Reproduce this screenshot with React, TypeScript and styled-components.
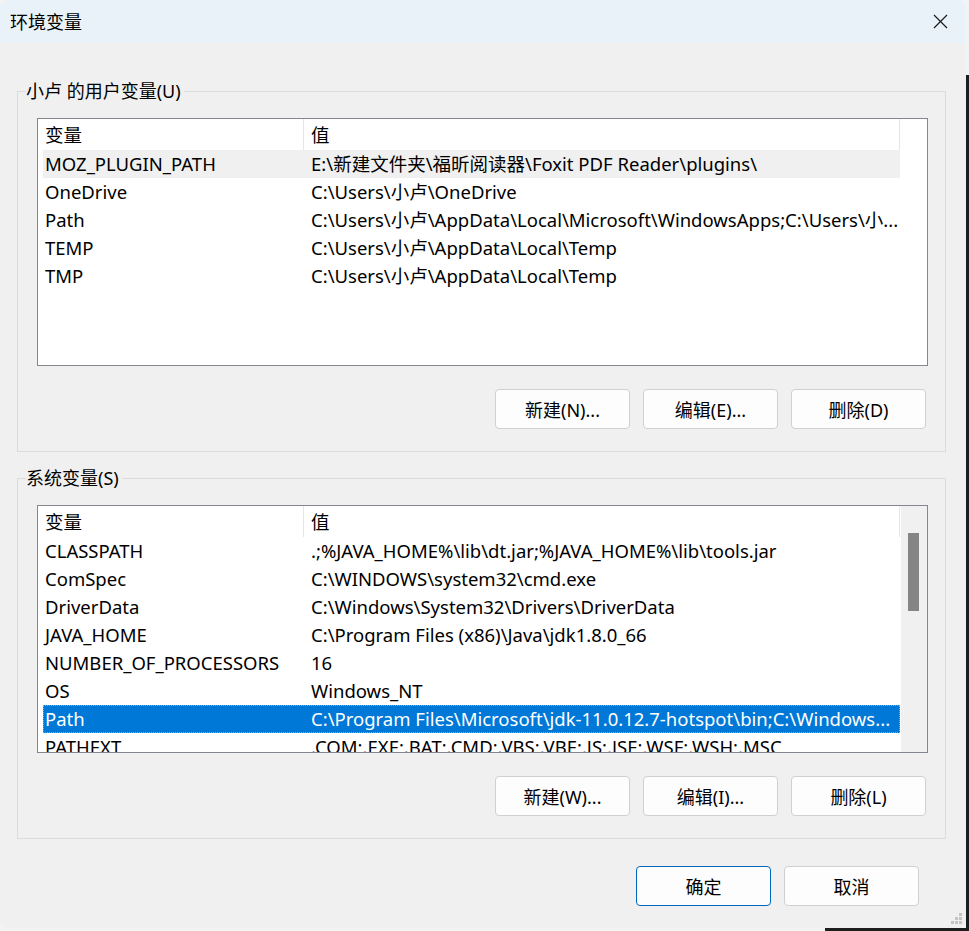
import React from "react";
import styled, { createGlobalStyle } from "styled-components";

const GlobalStyle = createGlobalStyle`
    html, body {
        margin: 0;
        padding: 0;
    }

    body {
        background:
            linear-gradient(#1e1e1e, #1e1e1e) 966px 75px / 3px 100% no-repeat,
            linear-gradient(#1e1e1e, #1e1e1e) 825px 928px / 200px 3px no-repeat,
            #f3f3f3;
        font-family: "Noto Sans", "Noto Sans CJK SC", sans-serif;
        color: #000;
    }

    * {
        box-sizing: border-box;
    }
`;

type Variable = {
    name: string;
    value: string;
};

const userVars: Variable[] = [
    { name: "MOZ_PLUGIN_PATH", value: "E:\\新建文件夹\\福昕阅读器\\Foxit PDF Reader\\plugins\\" },
    { name: "OneDrive", value: "C:\\Users\\小卢\\OneDrive" },
    { name: "Path", value: "C:\\Users\\小卢\\AppData\\Local\\Microsoft\\WindowsApps;C:\\Users\\小..." },
    { name: "TEMP", value: "C:\\Users\\小卢\\AppData\\Local\\Temp" },
    { name: "TMP", value: "C:\\Users\\小卢\\AppData\\Local\\Temp" },
];

const systemVars: Variable[] = [
    { name: "CLASSPATH", value: ".;%JAVA_HOME%\\lib\\dt.jar;%JAVA_HOME%\\lib\\tools.jar" },
    { name: "ComSpec", value: "C:\\WINDOWS\\system32\\cmd.exe" },
    { name: "DriverData", value: "C:\\Windows\\System32\\Drivers\\DriverData" },
    { name: "JAVA_HOME", value: "C:\\Program Files (x86)\\Java\\jdk1.8.0_66" },
    { name: "NUMBER_OF_PROCESSORS", value: "16" },
    { name: "OS", value: "Windows_NT" },
    { name: "Path", value: "C:\\Program Files\\Microsoft\\jdk-11.0.12.7-hotspot\\bin;C:\\Windows..." },
    { name: "PATHEXT", value: ".COM;.EXE;.BAT;.CMD;.VBS;.VBE;.JS;.JSE;.WSF;.WSH;.MSC" },
];

const Window = styled.div`
    position: relative;
    width: 966px;
    height: 928px;
    background: #f0f0f0;
    border-radius: 8px;
    overflow: hidden;
    display: flex;
    flex-direction: column;
    font-size: 18px;
`;

const TitleBar = styled.div`
    height: 43px;
    flex-shrink: 0;
    background: #eaf2f9;
    display: flex;
    align-items: center;
    justify-content: space-between;
    padding: 0 18px 0 10px;
`;

const Title = styled.span`
    font-size: 18px;
    line-height: 24px;
`;

const CloseIcon = styled.svg`
    display: block;
    width: 15px;
    height: 15px;
`;

const Body = styled.div`
    padding: 48px 20px 0 17px;
    display: flex;
    flex-direction: column;
`;

const Group = styled.div<{ $gap?: number }>`
    position: relative;
    border: 1px solid #dcdcdc;
    margin-top: ${({ $gap }) => $gap ?? 0}px;
    padding: 26px 17px 22px 19px;
`;

const Caption = styled.span`
    position: absolute;
    top: -13px;
    left: 8px;
    padding: 0 3px 0 0;
    background: #f0f0f0;
    line-height: 24px;
`;

const List = styled.div`
    height: 248px;
    border: 1px solid #828790;
    background: #fff;
    display: flex;
    overflow: hidden;
    font-size: 18.5px;
`;

const Table = styled.div`
    flex: 1;
    padding-left: 5px;
    overflow: hidden;
`;

const Header = styled.div`
    display: flex;
    height: 31px;
    width: 857px;
`;

const HeaderCell = styled.div<{ $width: number; $indent: number }>`
    width: ${({ $width }) => $width}px;
    padding-left: ${({ $indent }) => $indent}px;
    border-right: 1px solid #e5e5e5;
    line-height: 31px;
    white-space: nowrap;
`;

type RowState = "normal" | "hover" | "selected";

const Row = styled.div<{ $state: RowState }>`
    display: flex;
    width: 857px;
    height: 28px;
    flex-shrink: 0;
    background: ${({ $state }) =>
        $state === "selected" ? "#0078d7" : $state === "hover" ? "#f0f0f0" : "transparent"};
    color: ${({ $state }) => ($state === "selected" ? "#fff" : "#000")};
    outline: ${({ $state }) => ($state === "selected" ? "1px dotted #e8953f" : "none")};
    outline-offset: -1px;
`;

const Cell = styled.div<{ $width: number; $indent: number }>`
    width: ${({ $width }) => $width}px;
    padding-left: ${({ $indent }) => $indent}px;
    line-height: 28px;
    white-space: nowrap;
    overflow: hidden;
`;

const Scrollbar = styled.div`
    width: 26px;
    flex-shrink: 0;
    background: #f0f0f0;
    padding: 27px 0 0 7px;
`;

const Thumb = styled.div`
    width: 11px;
    height: 78px;
    background: #858585;
`;

const ButtonRow = styled.div<{ $top: number; $right: number }>`
    display: flex;
    justify-content: flex-end;
    gap: 13px;
    margin-top: ${({ $top }) => $top}px;
    padding-right: ${({ $right }) => $right}px;
`;

const Button = styled.button<{ $primary?: boolean }>`
    width: 135px;
    height: 40px;
    border: 1px solid ${({ $primary }) => ($primary ? "#0067c0" : "#d0d0d0")};
    border-radius: 4px;
    background: #fdfdfd;
    font-family: inherit;
    font-size: 18px;
    color: #000;
    padding: 0;
`;

const Grip = styled.svg`
    position: absolute;
    right: 3px;
    bottom: 3px;
    width: 13px;
    height: 13px;
`;

const COL1 = 261;
const COL2 = 596;

type VariableListProps = {
    rows: Variable[];
    hovered?: number;
    selected?: number;
    scroll?: boolean;
};

const VariableList: React.FC<VariableListProps> = ({ rows, hovered, selected, scroll }) => {
    return (
        <List>
            <Table>
                <Header>
                    <HeaderCell $width={COL1} $indent={2}>变量</HeaderCell>
                    <HeaderCell $width={COL2} $indent={7}>值</HeaderCell>
                </Header>
                {rows.map((row, i) => (
                    <Row
                        key={row.name + i}
                        $state={i === selected ? "selected" : i === hovered ? "hover" : "normal"}
                    >
                        <Cell $width={COL1} $indent={2}>{row.name}</Cell>
                        <Cell $width={COL2} $indent={7}>{row.value}</Cell>
                    </Row>
                ))}
            </Table>
            {scroll && (
                <Scrollbar>
                    <Thumb />
                </Scrollbar>
            )}
        </List>
    );
};

export default function App() {
    return (
        <>
            <GlobalStyle />
            <Window>
                <TitleBar>
                    <Title>环境变量</Title>
                    <CloseIcon viewBox="0 0 15 15">
                        <path d="M1 1 L14 14 M14 1 L1 14" stroke="#1a1a1a" strokeWidth="1.2" fill="none" />
                    </CloseIcon>
                </TitleBar>
                <Body>
                    <Group>
                        <Caption>小卢 的用户变量(U)</Caption>
                        <VariableList rows={userVars} hovered={0} />
                        <ButtonRow $top={23} $right={2}>
                            <Button>新建(N)...</Button>
                            <Button>编辑(E)...</Button>
                            <Button>删除(D)</Button>
                        </ButtonRow>
                    </Group>
                    <Group $gap={26}>
                        <Caption>系统变量(S)</Caption>
                        <VariableList rows={systemVars} selected={6} scroll />
                        <ButtonRow $top={23} $right={2}>
                            <Button>新建(W)...</Button>
                            <Button>编辑(I)...</Button>
                            <Button>删除(L)</Button>
                        </ButtonRow>
                    </Group>
                    <ButtonRow $top={27} $right={27}>
                        <Button $primary>确定</Button>
                        <Button>取消</Button>
                    </ButtonRow>
                </Body>
                <Grip viewBox="0 0 13 13">
                    <g fill="#c4c4c4">
                        <rect x="9" y="1" width="3" height="3" />
                        <rect x="5" y="5" width="3" height="3" />
                        <rect x="9" y="5" width="3" height="3" />
                        <rect x="1" y="9" width="3" height="3" />
                        <rect x="5" y="9" width="3" height="3" />
                        <rect x="9" y="9" width="3" height="3" />
                    </g>
                </Grip>
            </Window>
        </>
    );
}
